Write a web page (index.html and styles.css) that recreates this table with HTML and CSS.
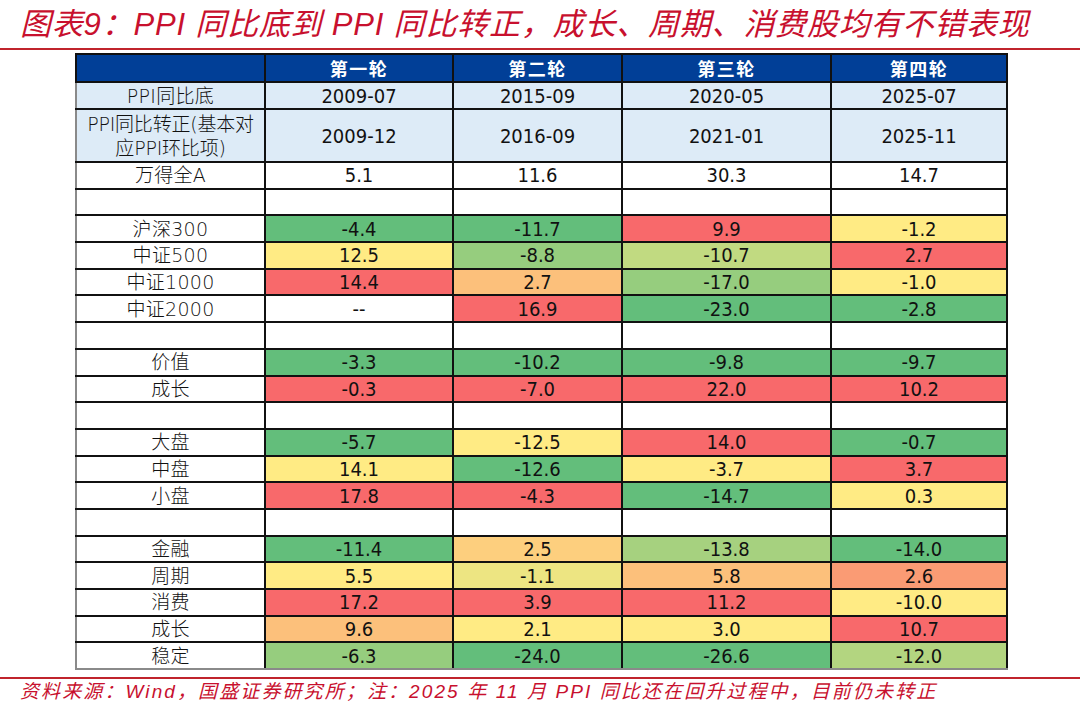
FILE: index.html
```html
<!DOCTYPE html>
<html lang="zh-CN">
<head>
<meta charset="utf-8">
<title>图表9</title>
<link rel="stylesheet" href="styles.css">
</head>
<body>
<div class="page">
  <h1 class="title">图表9：PPI 同比底到 PPI 同比转正，成长、周期、消费股均有不错表现</h1>
  <div class="rule"></div>
  <table class="grid">
    <colgroup>
      <col class="c-label"><col class="c-1"><col class="c-2"><col class="c-3"><col class="c-4">
    </colgroup>
    <thead>
      <tr class="head"><th></th><th>第一轮</th><th>第二轮</th><th>第三轮</th><th>第四轮</th></tr>
    </thead>
    <tbody>
      <tr class="info"><td>PPI同比底</td><td>2009-07</td><td>2015-09</td><td>2020-05</td><td>2025-07</td></tr>
      <tr class="info tall"><td class="wrap">PPI同比转正(基本对<br>应PPI环比项)</td><td>2009-12</td><td>2016-09</td><td>2021-01</td><td>2025-11</td></tr>
      <tr class="row first"><td>万得全A</td><td>5.1</td><td>11.6</td><td>30.3</td><td>14.7</td></tr>
      <tr class="row"><td></td><td></td><td></td><td></td><td></td></tr>
      <tr class="row"><td>沪深300</td><td class="g0">-4.4</td><td class="g0">-11.7</td><td class="r">9.9</td><td class="y">-1.2</td></tr>
      <tr class="row"><td>中证500</td><td class="y">12.5</td><td class="g1">-8.8</td><td class="g4">-10.7</td><td class="r">2.7</td></tr>
      <tr class="row"><td>中证1000</td><td class="r">14.4</td><td class="o2">2.7</td><td class="g1">-17.0</td><td class="y">-1.0</td></tr>
      <tr class="row"><td>中证2000</td><td>--</td><td class="r">16.9</td><td class="g0">-23.0</td><td class="g0">-2.8</td></tr>
      <tr class="row"><td></td><td></td><td></td><td></td><td></td></tr>
      <tr class="row"><td>价值</td><td class="g0">-3.3</td><td class="g0">-10.2</td><td class="g0">-9.8</td><td class="g0">-9.7</td></tr>
      <tr class="row"><td>成长</td><td class="r">-0.3</td><td class="r">-7.0</td><td class="r">22.0</td><td class="r">10.2</td></tr>
      <tr class="row"><td></td><td></td><td></td><td></td><td></td></tr>
      <tr class="row"><td>大盘</td><td class="g0">-5.7</td><td class="y">-12.5</td><td class="r">14.0</td><td class="g0">-0.7</td></tr>
      <tr class="row"><td>中盘</td><td class="y">14.1</td><td class="g0">-12.6</td><td class="y">-3.7</td><td class="r">3.7</td></tr>
      <tr class="row"><td>小盘</td><td class="r">17.8</td><td class="r">-4.3</td><td class="g0">-14.7</td><td class="y">0.3</td></tr>
      <tr class="row"><td></td><td></td><td></td><td></td><td></td></tr>
      <tr class="row"><td>金融</td><td class="g0">-11.4</td><td class="o1">2.5</td><td class="g2">-13.8</td><td class="g0">-14.0</td></tr>
      <tr class="row"><td>周期</td><td class="y">5.5</td><td class="yg">-1.1</td><td class="o2">5.8</td><td class="o3">2.6</td></tr>
      <tr class="row"><td>消费</td><td class="r">17.2</td><td class="r">3.9</td><td class="r">11.2</td><td class="y">-10.0</td></tr>
      <tr class="row"><td>成长</td><td class="o2">9.6</td><td class="y">2.1</td><td class="y">3.0</td><td class="r">10.7</td></tr>
      <tr class="row last"><td>稳定</td><td class="g1">-6.3</td><td class="g0">-24.0</td><td class="g0">-26.6</td><td class="g3">-12.0</td></tr>
    </tbody>
  </table>
  <div class="rule bottom"></div>
  <p class="source">资料来源：Wind，国盛证券研究所；注：2025 年 11 月 PPI 同比还在回升过程中，目前仍未转正</p>
</div>
</body>
</html>
```

FILE: styles.css
```css
html, body {
  margin: 0;
  padding: 0;
  background: #ffffff;
}

.page {
  width: 1080px;
  height: 711px;
  overflow: hidden;
}

.title {
  margin: 0;
  height: 48px;
  padding-left: 20px;
  padding-top: 2px;
  box-sizing: border-box;
  font-family: "Liberation Sans", "Noto Sans CJK SC", sans-serif;
  font-style: italic;
  font-weight: 400;
  font-size: 31px;
  line-height: 46px;
  letter-spacing: 0.8px;
  color: #c8102e;
  white-space: nowrap;
}

.rule {
  height: 2px;
  background: #c0242c;
}

.rule.bottom {
  margin-top: 7px;
}

.grid {
  margin: 3px 0 0 75px;
  width: 931px;
  table-layout: fixed;
  border-collapse: collapse;
  font-family: "DejaVu Sans", "Noto Sans CJK SC", sans-serif;
  font-stretch: condensed;
  font-size: 20px;
  color: #111;
  border-left: 2px solid #8a8a8a;
  border-bottom: 2px solid #8a8a8a;
  border-right: 2px solid #333;
}

.c-label { width: 189px; }
.c-1 { width: 188px; }
.c-2 { width: 169px; }
.c-3 { width: 209px; }
.c-4 { width: 176px; }

.grid th,
.grid td {
  padding: 0;
  text-align: center;
  vertical-align: middle;
  border: 2px solid #111;
  white-space: nowrap;
  overflow: hidden;
}

.grid td:first-child {
  border-left-color: #8a8a8a;
  font-weight: 300;
  font-size: 19px;
  letter-spacing: 0.3px;
}

.grid tr.last td {
  border-bottom-color: #8a8a8a;
}

.head th {
  height: 26px;
  background: #013f97;
  color: #ffffff;
  font-family: "Noto Sans CJK SC", sans-serif;
  font-weight: 700;
  font-size: 18px;
  letter-spacing: 1.5px;
  line-height: 22px;
}

.info td {
  height: 25px;
  background: #ddebf7;
  line-height: 22px;
}

.info.tall td {
  height: 51px;
}

.grid .info td.wrap {
  white-space: normal;
  line-height: 24px;
  letter-spacing: -0.2px;
}

.row td {
  height: 24.7px;
  line-height: 20px;
  background: #ffffff;
}

.grid td.g0 { background: #63be7b; }
.grid td.g1 { background: #96cd7e; }
.grid td.g2 { background: #a6d17f; }
.grid td.g3 { background: #b3d580; }
.grid td.g4 { background: #c1da81; }
.grid td.yg { background: #ede582; }
.grid td.y  { background: #ffeb84; }
.grid td.o1 { background: #fdcf7e; }
.grid td.o2 { background: #fcc07b; }
.grid td.o3 { background: #fa9b74; }
.grid td.r  { background: #f8696b; }

.source {
  margin: 0;
  padding-left: 20px;
  font-family: "Liberation Sans", "Noto Sans CJK SC", sans-serif;
  font-style: italic;
  font-size: 19px;
  line-height: 26px;
  letter-spacing: 2.1px;
  color: #c8102e;
  white-space: nowrap;
}
```
